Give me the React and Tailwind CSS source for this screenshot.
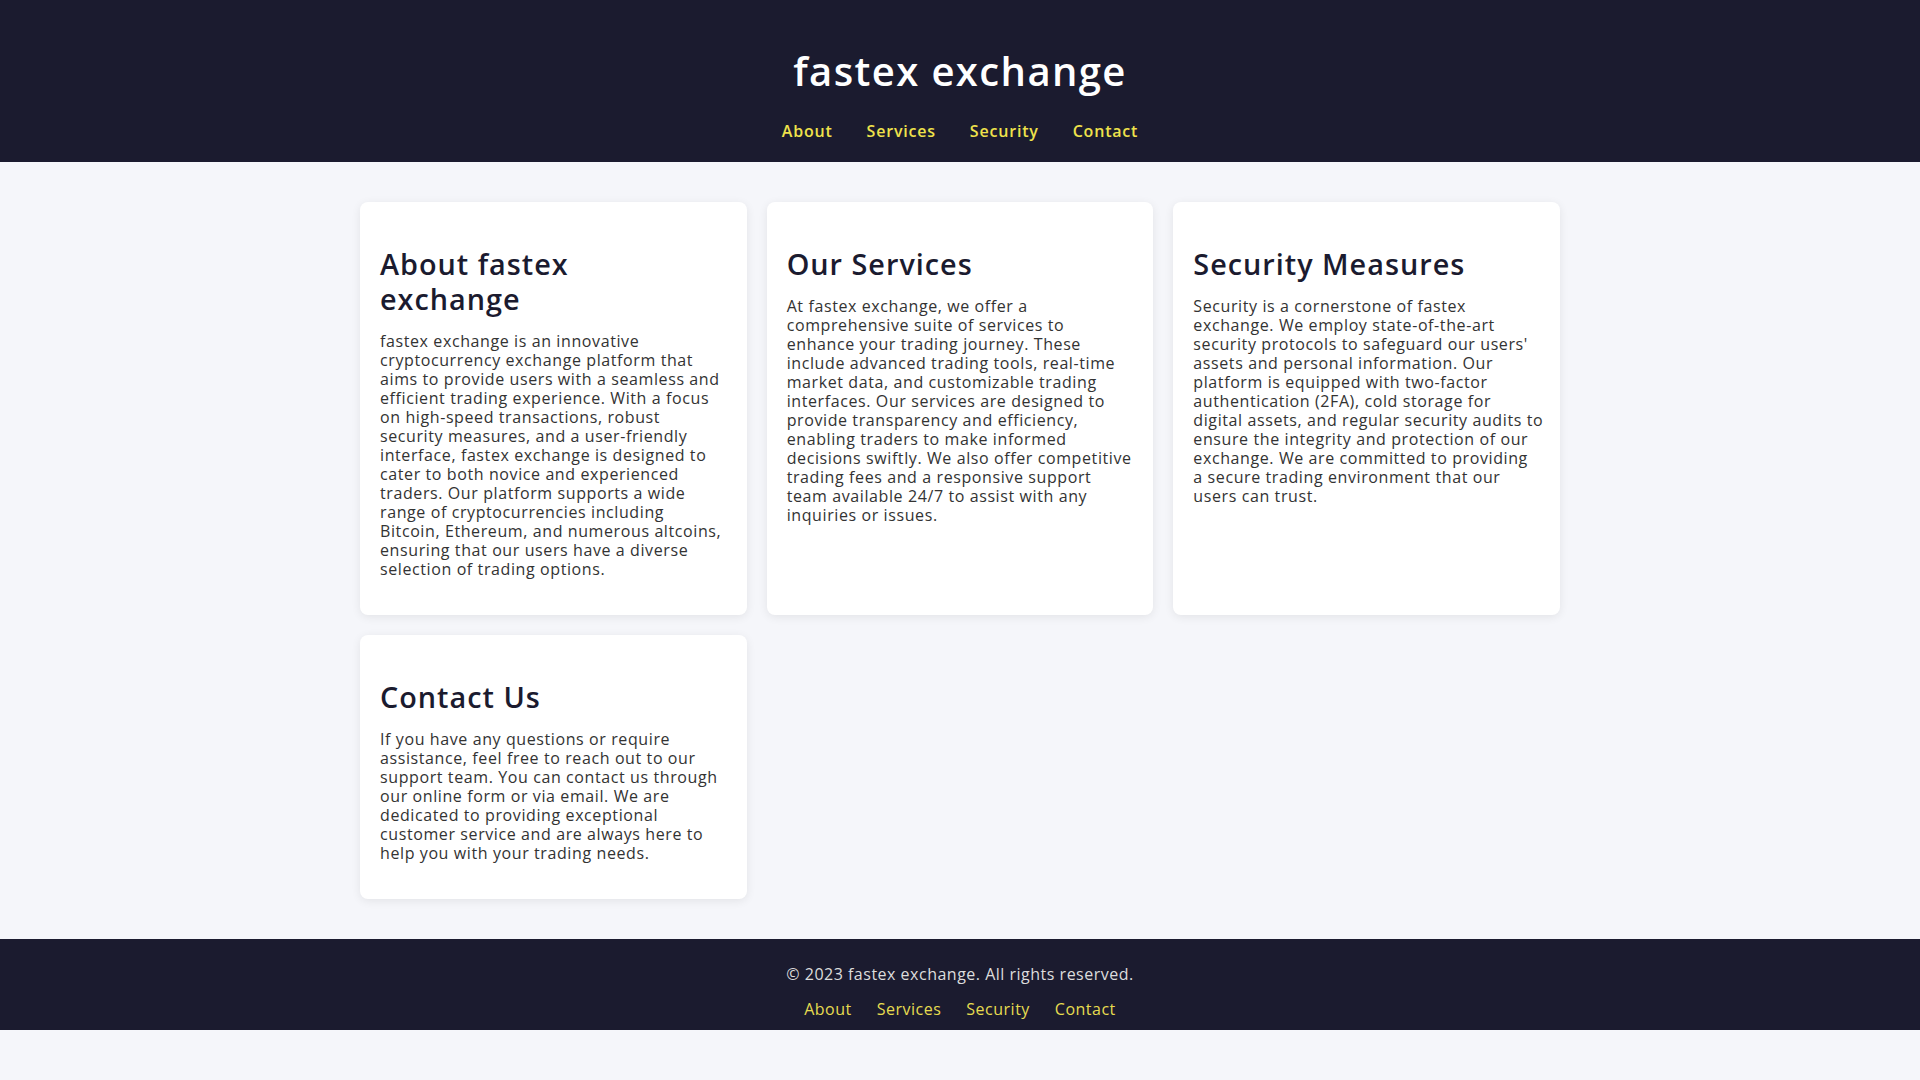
const links = ["About", "Services", "Security", "Contact"];

const sections = [
    {
        title: "About fastex\nexchange",
        text: `fastex exchange is an innovative
cryptocurrency exchange platform that
aims to provide users with a seamless and
efficient trading experience. With a focus
on high-speed transactions, robust
security measures, and a user-friendly
interface, fastex exchange is designed to
cater to both novice and experienced
traders. Our platform supports a wide
range of cryptocurrencies including
Bitcoin, Ethereum, and numerous altcoins,
ensuring that our users have a diverse
selection of trading options.`,
    },
    {
        title: "Our Services",
        text: `At fastex exchange, we offer a
comprehensive suite of services to
enhance your trading journey. These
include advanced trading tools, real-time
market data, and customizable trading
interfaces. Our services are designed to
provide transparency and efficiency,
enabling traders to make informed
decisions swiftly. We also offer competitive
trading fees and a responsive support
team available 24/7 to assist with any
inquiries or issues.`,
    },
    {
        title: "Security Measures",
        text: `Security is a cornerstone of fastex
exchange. We employ state-of-the-art
security protocols to safeguard our users'
assets and personal information. Our
platform is equipped with two-factor
authentication (2FA), cold storage for
digital assets, and regular security audits to
ensure the integrity and protection of our
exchange. We are committed to providing
a secure trading environment that our
users can trust.`,
    },
    {
        title: "Contact Us",
        text: `If you have any questions or require
assistance, feel free to reach out to our
support team. You can contact us through
our online form or via email. We are
dedicated to providing exceptional
customer service and are always here to
help you with your trading needs.`,
    },
];

export default function App() {
    return (
        <div className="min-h-screen bg-[#f5f6fa] font-['Open_Sans',sans-serif] tracking-[0.5px]">
            <header className="bg-[#1b1b2f] py-5 text-center">
                <h1 className="my-[27px] text-[40px] leading-[48px] font-semibold text-white tracking-[1.4px]">
                    fastex exchange
                </h1>
                <nav className="flex justify-center gap-[34px] text-[16px] leading-[19.5px] font-semibold text-[#efe24b] tracking-[0.8px]">
                    {links.map((l) => (
                        <a key={l} href={"#" + l.toLowerCase()}>
                            {l}
                        </a>
                    ))}
                </nav>
            </header>

            <main className="mx-auto grid max-w-[1200px] grid-cols-3 gap-5 py-10">
                {sections.map((s) => (
                    <section
                        key={s.title}
                        className="rounded-lg bg-white p-5 shadow-[0_2px_10px_rgba(0,0,0,0.08)]"
                    >
                        <h2 className="mt-6 mb-4 whitespace-pre-line text-[28.8px] leading-[35px] font-semibold text-[#1b1b2f] tracking-[1px]">
                            {s.title}
                        </h2>
                        <p className="mb-4 whitespace-pre text-[16px] leading-[19px] text-[#333] tracking-[0.6px]">
                            {s.text}
                        </p>
                    </section>
                ))}
            </main>

            <footer className="bg-[#1b1b2f] py-[10px] text-center text-[16px] leading-[19.5px]">
                <p className="my-4 text-[#dddddd]">
                    © 2023 fastex exchange. All rights reserved.
                </p>
                <nav className="flex justify-center gap-[25px] text-[#e6dc4f]">
                    {links.map((l) => (
                        <a key={l} href={"#" + l.toLowerCase()}>
                            {l}
                        </a>
                    ))}
                </nav>
            </footer>
        </div>
    );
}
